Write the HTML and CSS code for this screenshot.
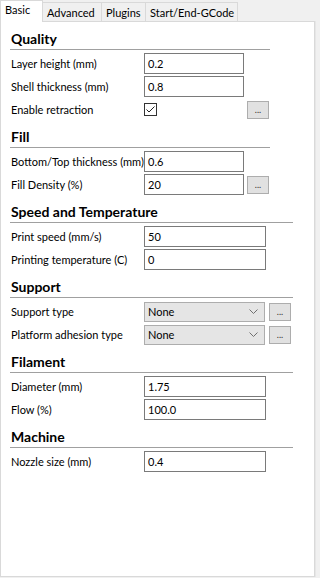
FILE: index.html
```html
<!DOCTYPE html>
<html lang="en">
<head>
    <meta charset="UTF-8">
    <title>Basic settings</title>
    <link rel="stylesheet" href="styles.css">
</head>
<body>
    <div class="tabs">
        <div class="tab active basic">Basic</div>
        <div class="tab advanced">Advanced</div>
        <div class="tab plugins">Plugins</div>
        <div class="tab gcode">Start/End-GCode</div>
    </div>
    <div class="panel">
        <section class="group narrow">
            <h2>Quality</h2>
            <div class="rows">
                <label>Layer height (mm)</label>
                <div class="field">0.2</div>
                <span></span>
                <label>Shell thickness (mm)</label>
                <div class="field">0.8</div>
                <span></span>
                <label>Enable retraction</label>
                <div class="check">
                    <svg width="13" height="13" viewBox="0 0 13 13"><path d="M2.5 6.5 L5 9 L10.5 3.5" fill="none" stroke="#222" stroke-width="1"/></svg>
                </div>
                <button class="more">...</button>
            </div>
        </section>
        <section class="group narrow">
            <h2>Fill</h2>
            <div class="rows">
                <label>Bottom/Top thickness (mm)</label>
                <div class="field">0.6</div>
                <span></span>
                <label>Fill Density (%)</label>
                <div class="field">20</div>
                <button class="more">...</button>
            </div>
        </section>
        <section class="group wide">
            <h2>Speed and Temperature</h2>
            <div class="rows">
                <label>Print speed (mm/s)</label>
                <div class="field">50</div>
                <span></span>
                <label>Printing temperature (C)</label>
                <div class="field">0</div>
                <span></span>
            </div>
        </section>
        <section class="group wide">
            <h2>Support</h2>
            <div class="rows">
                <label>Support type</label>
                <div class="choice">None
                    <svg width="9" height="6" viewBox="0 0 9 6"><path d="M0.5 0.5 L4.5 4.5 L8.5 0.5" fill="none" stroke="#707070" stroke-width="1"/></svg>
                </div>
                <button class="more">...</button>
                <label>Platform adhesion type</label>
                <div class="choice">None
                    <svg width="9" height="6" viewBox="0 0 9 6"><path d="M0.5 0.5 L4.5 4.5 L8.5 0.5" fill="none" stroke="#707070" stroke-width="1"/></svg>
                </div>
                <button class="more">...</button>
            </div>
        </section>
        <section class="group wide">
            <h2>Filament</h2>
            <div class="rows">
                <label>Diameter (mm)</label>
                <div class="field">1.75</div>
                <span></span>
                <label>Flow (%)</label>
                <div class="field">100.0</div>
                <span></span>
            </div>
        </section>
        <section class="group wide">
            <h2>Machine</h2>
            <div class="rows">
                <label>Nozzle size (mm)</label>
                <div class="field">0.4</div>
                <span></span>
            </div>
        </section>
    </div>
</body>
</html>
```

FILE: styles.css
```css
body {
    margin: 0;
    background-color: #f0f0f0;
    font-family: Lato, "Open Sans", sans-serif;
    font-size: 11px;
    color: #000;
}
.tabs {
    display: flex;
    align-items: flex-end;
    height: 21px;
}
.tab {
    box-sizing: border-box;
    height: 19px;
    line-height: 19px;
    padding-left: 4px;
    border: 1px solid #d9d9d9;
    border-bottom: 0;
    margin-left: -1px;
    background-color: #f0f0f0;
    white-space: nowrap;
}
.tab.active {
    position: relative;
    z-index: 1;
    height: 22px;
    line-height: 18px;
    margin-left: 0;
    margin-bottom: -1px;
    background-color: #fff;
}
.basic { width: 43px; }
.advanced { width: 60px; }
.plugins { width: 45px; }
.gcode { width: 93px; }
.panel {
    width: 315px;
    height: 556px;
    box-sizing: border-box;
    padding-left: 9px;
    background-color: #fff;
    border: 1px solid #d9d9d9;
    box-shadow: 1px 0 0 #e6e6e6;
}
.group {
    padding-top: 7px;
}
.narrow {
    width: 260px;
}
.wide {
    width: 283px;
}
.group h2 {
    margin: 0;
    height: 20px;
    line-height: 20px;
    padding-left: 1px;
    font-size: 14px;
    font-weight: bold;
    border-bottom: 1px solid #a0a0a0;
}
.rows {
    display: grid;
    grid-template-columns: 131px 100px auto;
    grid-auto-rows: 21px;
    column-gap: 3px;
    row-gap: 2px;
    align-items: center;
    margin-top: 3px;
}
.wide .rows {
    grid-template-columns: 131px 122px auto;
}
.rows label {
    padding-left: 1px;
    white-space: nowrap;
}
.field {
    height: 21px;
    line-height: 19px;
    box-sizing: border-box;
    padding-left: 3px;
    border: 1px solid #7a7a7a;
    background-color: #fff;
}
.choice {
    display: flex;
    align-items: center;
    justify-content: space-between;
    width: 121px;
    height: 20px;
    box-sizing: border-box;
    padding: 0 6px 0 3px;
    border: 1px solid #adadad;
    background-color: #e5e5e5;
}
.check {
    width: 13px;
    height: 13px;
    border: 1px solid #333;
    box-sizing: border-box;
    background-color: #fff;
}
.check svg {
    display: block;
    margin: -1px;
}
.more {
    width: 22px;
    height: 18px;
    padding: 0;
    font-family: inherit;
    font-size: 9px;
    line-height: 14px;
    border: 1px solid #adadad;
    background-color: #e1e1e1;
    color: #333;
}
```
